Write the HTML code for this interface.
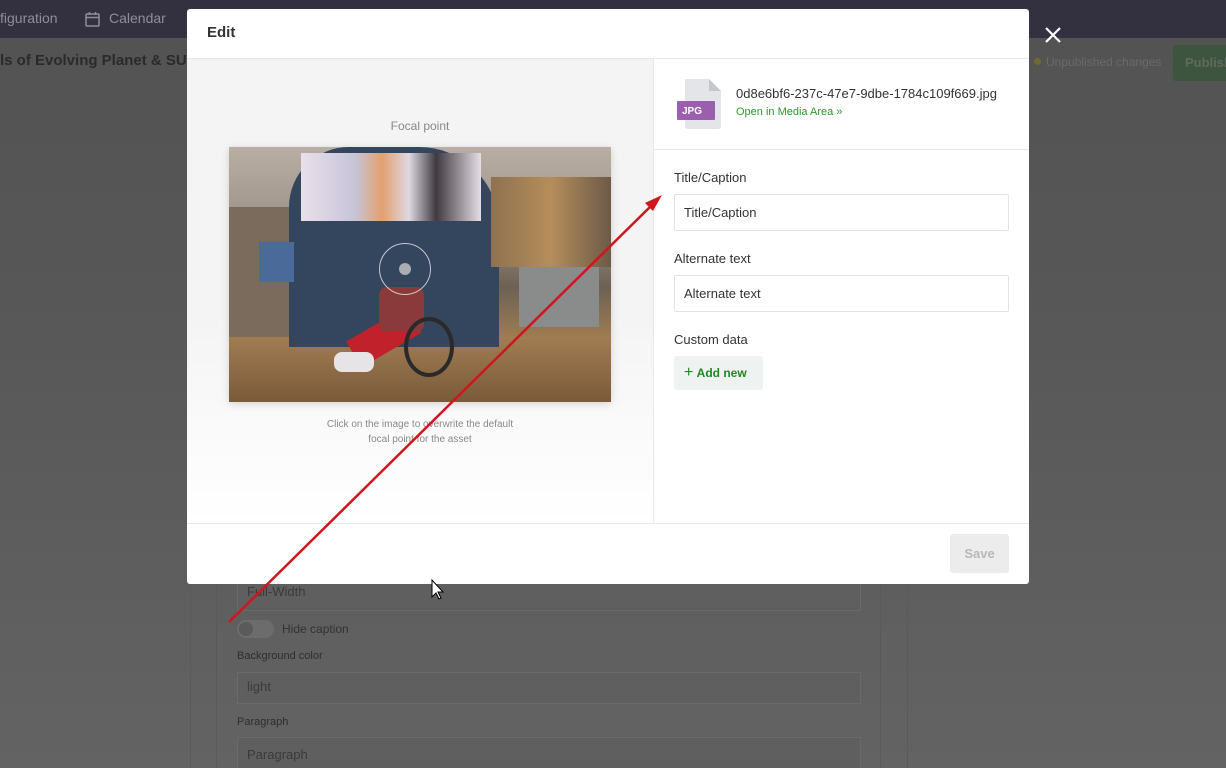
<!DOCTYPE html>
<html style="background:#585858"><head><meta charset="utf-8"><style>
*{box-sizing:border-box;margin:0;padding:0}
body{width:1226px;height:768px;overflow:hidden;position:relative;font-family:"Liberation Sans",sans-serif;background:linear-gradient(#535353 40px,#575757 300px,#636363 768px)}
.abs{position:absolute}
.nav{left:0;top:0;width:1226px;height:38px;background:#33313f;color:#8f8e98;font-size:14px}
.field{border:1px solid #6a6a6a;background:#5f5f5f}
.modal{left:187px;top:9px;width:842px;height:575px;background:#fff;border-radius:3px;overflow:hidden}
.lbl{font-size:13px;color:#333}
.inp{border:1px solid #e3e3e3;height:37px;font-size:13px;color:#333;padding:10px 9px;border-radius:2px}
</style></head><body>
<div class="abs nav">
 <span class="abs" style="left:0;top:10px">figuration</span>
 <svg class="abs" style="left:85px;top:11px" width="15" height="16" viewBox="0 0 15 16"><rect x="1" y="3" width="13" height="12" rx="1" fill="none" stroke="#8f8e98" stroke-width="1.5"/><line x1="1" y1="6.5" x2="14" y2="6.5" stroke="#8f8e98" stroke-width="1.5"/><line x1="4.5" y1="1" x2="4.5" y2="4" stroke="#8f8e98" stroke-width="1.5"/><line x1="10.5" y1="1" x2="10.5" y2="4" stroke="#8f8e98" stroke-width="1.5"/></svg>
 <span class="abs" style="left:109px;top:10px">Calendar</span>
</div>
<div class="abs" style="left:0;top:52px;font-size:15px;font-weight:bold;color:#2a2a2a">ls of Evolving Planet &amp; SU</div>
<div class="abs" style="left:1034px;top:58px;width:7px;height:7px;border-radius:50%;background:#6d6b2e"></div>
<div class="abs" style="left:1046px;top:55px;font-size:12px;color:#6a6a6a">Unpublished changes</div>
<div class="abs" style="left:1173px;top:45px;width:60px;height:36px;background:#3d553e;border-radius:3px;color:#5e6a5e;font-weight:bold;font-size:13px;padding:10px 12px">Publish</div>
<div class="abs" style="left:190px;top:584px;width:1px;height:184px;background:#5a5a5a"></div>
<div class="abs" style="left:216px;top:584px;width:1px;height:184px;background:#5a5a5a"></div>
<div class="abs" style="left:880px;top:584px;width:1px;height:184px;background:#5a5a5a"></div>
<div class="abs" style="left:907px;top:584px;width:1px;height:184px;background:#5a5a5a"></div>
<div class="abs field" style="left:237px;top:575px;width:624px;height:36px"></div>
<div class="abs" style="left:247px;top:584px;font-size:13px;color:#3a3a3a">Full-Width</div>
<div class="abs" style="left:237px;top:620px;width:37px;height:18px;border-radius:9px;background:#6c6c6c"></div>
<div class="abs" style="left:239px;top:622px;width:14px;height:14px;border-radius:50%;background:#5a5a5a"></div>
<div class="abs" style="left:282px;top:622px;font-size:12px;color:#333">Hide caption</div>
<div class="abs" style="left:237px;top:650px;font-size:11px;color:#2e2e2e">Background color</div>
<div class="abs field" style="left:237px;top:672px;width:624px;height:32px"></div>
<div class="abs" style="left:247px;top:679px;font-size:13px;color:#3a3a3a">light</div>
<div class="abs" style="left:237px;top:716px;font-size:11px;color:#2e2e2e">Paragraph</div>
<div class="abs field" style="left:237px;top:737px;width:624px;height:31px;border-bottom:none"></div>
<div class="abs" style="left:247px;top:747px;font-size:13px;color:#3a3a3a">Paragraph</div>

<div class="abs modal">
 <div class="abs" style="left:20px;top:15px;font-size:15px;font-weight:bold;color:#333">Edit</div>
 <div class="abs" style="left:0;top:49px;width:842px;height:1px;background:#e8e8e8"></div>
 <div class="abs" style="left:0;top:50px;width:466px;height:464px;background:linear-gradient(#f4f4f4 0,#f4f4f4 55%,#fff 100%)"></div>
 <div class="abs" style="left:466px;top:50px;width:1px;height:464px;background:#e8e8e8"></div>
 <div class="abs" style="left:0;top:110px;width:466px;text-align:center;font-size:12px;color:#888">Focal point</div>
 <div class="abs" style="left:42px;top:138px;width:382px;height:255px;overflow:hidden;box-shadow:0 2px 8px rgba(0,0,0,.15);background:linear-gradient(#b8aea4 0,#9d9388 30%,#6d6154 55%,#a07c52 75%,#7a5a3a 100%)">
  <div class="abs" style="left:0;top:60px;width:60px;height:130px;background:#7a6b5c"></div>
  <div class="abs" style="left:60px;top:0;width:210px;height:200px;border-radius:60px 80px 0 0;background:#33465e"></div>
  <div class="abs" style="left:72px;top:6px;width:180px;height:68px;background:linear-gradient(90deg,#e8e0ea,#c8c4d8 30%,#e2a070 45%,#ded8e2 60%,#403a40 75%,#e6dee6)"></div>
  <div class="abs" style="left:262px;top:30px;width:120px;height:90px;background:linear-gradient(90deg,#8e7252,#b58d5a,#6c5a48)"></div>
  <div class="abs" style="left:290px;top:120px;width:80px;height:60px;background:#8a8c8c"></div>
  <div class="abs" style="left:30px;top:95px;width:35px;height:40px;background:#4a6a9a"></div>
  <div class="abs" style="left:120px;top:175px;width:70px;height:30px;background:#c0212a;transform:rotate(-30deg)"></div>
  <div class="abs" style="left:105px;top:205px;width:40px;height:20px;background:#e6e4e6;border-radius:8px"></div>
  <div class="abs" style="left:150px;top:140px;width:45px;height:45px;background:#8a3a3a;border-radius:8px"></div>
  <div class="abs" style="left:175px;top:170px;width:50px;height:60px;border:4px solid #2a2a2a;border-radius:50%"></div>
  <div class="abs" style="left:150px;top:96px;width:52px;height:52px;border:1px solid rgba(255,255,255,.7);border-radius:50%"></div>
  <div class="abs" style="left:170px;top:116px;width:12px;height:12px;background:rgba(200,200,200,.8);border-radius:50%"></div>
 </div>
 <div class="abs" style="left:0;top:408px;width:466px;text-align:center;font-size:10px;line-height:15px;color:#888">Click on the image to overwrite the default<br>focal point for the asset</div>

 <svg class="abs" style="left:488px;top:69px" width="48" height="52" viewBox="0 0 48 52"><path d="M10 1H34L46 13V48a3 3 0 0 1-3 3H13a3 3 0 0 1-3-3Z" fill="#e3e5e8"/><path d="M34 1V13H46Z" fill="#c4c8ce"/><rect x="2" y="23" width="38" height="19" rx="1" fill="#9b5fae"/><text x="7" y="36" font-size="10" font-weight="bold" fill="#fff" font-family="Liberation Sans">JPG</text></svg>
 <div class="abs" style="left:549px;top:77px;font-size:13px;color:#333">0d8e6bf6-237c-47e7-9dbe-1784c109f669.jpg</div>
 <div class="abs" style="left:549px;top:97px;font-size:11px;color:#2a9b2a">Open in Media Area »</div>
 <div class="abs" style="left:467px;top:140px;width:375px;height:1px;background:#e8e8e8"></div>
 <div class="abs lbl" style="left:487px;top:161px">Title/Caption</div>
 <div class="abs inp" style="left:487px;top:185px;width:335px">Title/Caption</div>
 <div class="abs lbl" style="left:487px;top:242px">Alternate text</div>
 <div class="abs inp" style="left:487px;top:266px;width:335px">Alternate text</div>
 <div class="abs lbl" style="left:487px;top:323px">Custom data</div>
 <div class="abs" style="left:487px;top:347px;width:89px;height:34px;background:#eef2f1;border-radius:3px;color:#1f8a1f;font-weight:bold;font-size:12px;padding:8px 10px;white-space:nowrap"><span style="font-weight:normal;font-size:16px">+</span>&nbsp;Add new</div>
 <div class="abs" style="left:0;top:514px;width:842px;height:1px;background:#e8e8e8"></div>
 <div class="abs" style="left:763px;top:525px;width:59px;height:39px;background:#ececec;border-radius:3px;color:#b8b8b8;font-weight:bold;font-size:13px;text-align:center;line-height:39px">Save</div>
</div>

<svg class="abs" style="left:1044px;top:26px" width="18" height="18"><path d="M2 2L16 16M16 2L2 16" stroke="#fff" stroke-width="2.2"/></svg>
<svg class="abs" style="left:0;top:0" width="1226" height="768"><line x1="229" y1="622" x2="654" y2="203" stroke="#d0161c" stroke-width="2.5"/><path d="M662 195L645 203L653 211Z" fill="#d0161c"/>
<path d="M432 580V597L436 593L439 599L441 598L438 592H443Z" fill="#fff" stroke="#000" stroke-width="1"/></svg>
</body></html>
